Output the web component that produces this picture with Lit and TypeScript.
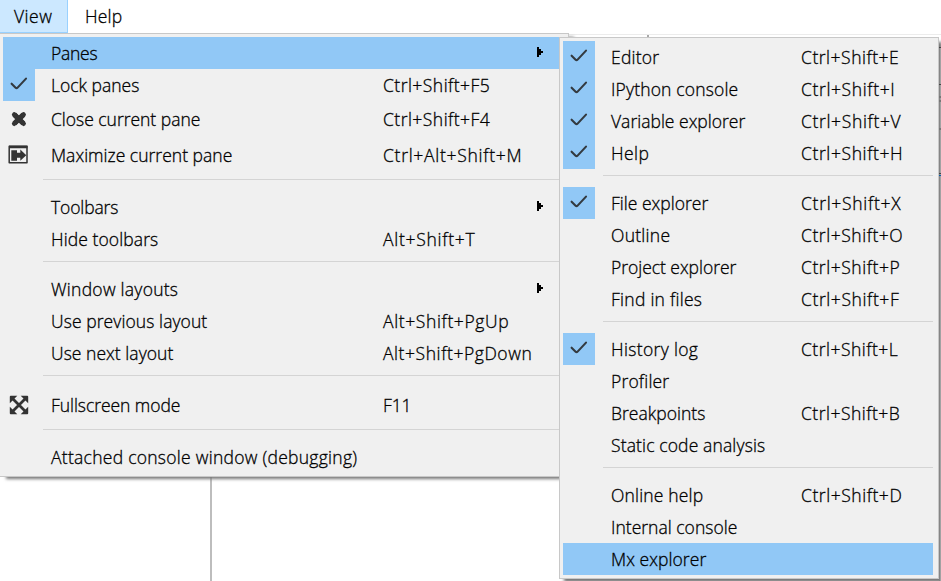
import { LitElement, html, css, svg, nothing } from "lit";
import { customElement, property } from "lit/decorators.js";

type Item = { label: string; w: number; keys?: string; kw?: number; icon?: string; tall?: boolean; sub?: boolean; hot?: boolean } | null;

const viewItems: Item[] = [
  { label: "Panes", w: 46, sub: true, hot: true },
  { label: "Lock panes", w: 88, keys: "Ctrl+Shift+F5", kw: 107, icon: "check" },
  { label: "Close current pane", w: 149, keys: "Ctrl+Shift+F4", kw: 107, icon: "close", tall: true },
  { label: "Maximize current pane", w: 181, keys: "Ctrl+Alt+Shift+M", kw: 139, icon: "maximize", tall: true },
  null,
  { label: "Toolbars", w: 67, sub: true },
  { label: "Hide toolbars", w: 107, keys: "Alt+Shift+T", kw: 92 },
  null,
  { label: "Window layouts", w: 127, sub: true },
  { label: "Use previous layout", w: 156, keys: "Alt+Shift+PgUp", kw: 126 },
  { label: "Use next layout", w: 122, keys: "Alt+Shift+PgDown", kw: 149 },
  null,
  { label: "Fullscreen mode", w: 129, keys: "F11", kw: 28, icon: "full", tall: true },
  null,
  { label: "Attached console window (debugging)", w: 306 },
];

const paneItems: Item[] = [
  { label: "Editor", w: 48, keys: "Ctrl+Shift+E", kw: 98, icon: "check" },
  { label: "IPython console", w: 127, keys: "Ctrl+Shift+I", kw: 94, icon: "check" },
  { label: "Variable explorer", w: 134, keys: "Ctrl+Shift+V", kw: 100, icon: "check" },
  { label: "Help", w: 38, keys: "Ctrl+Shift+H", kw: 102, icon: "check" },
  null,
  { label: "File explorer", w: 97, keys: "Ctrl+Shift+X", kw: 100, icon: "check" },
  { label: "Outline", w: 59, keys: "Ctrl+Shift+O", kw: 102 },
  { label: "Project explorer", w: 125, keys: "Ctrl+Shift+P", kw: 99 },
  { label: "Find in files", w: 91, keys: "Ctrl+Shift+F", kw: 98 },
  null,
  { label: "History log", w: 87, keys: "Ctrl+Shift+L", kw: 97, icon: "check" },
  { label: "Profiler", w: 58 },
  { label: "Breakpoints", w: 94, keys: "Ctrl+Shift+B", kw: 99 },
  { label: "Static code analysis", w: 154 },
  null,
  { label: "Online help", w: 92, keys: "Ctrl+Shift+D", kw: 101 },
  { label: "Internal console", w: 126 },
  { label: "Mx explorer", w: 95, hot: true },
];

const icons: Record<string, unknown> = {
  check: svg`<path d="M8.6 14.7 L12.6 18.8 Q13.6 19.7 14.6 18.6 L23 9.6" fill="none" stroke="#333a40" stroke-width="2.1" stroke-linecap="round"/>`,
  close: svg`<path d="M11.4 11.7 L20.4 20.5 M20.4 11.7 L11.4 20.5" fill="none" stroke="#333" stroke-width="5.2" stroke-linecap="butt"/><path d="M11.2 11.5 L20.6 20.7 M20.6 11.5 L11.2 20.7" fill="none" stroke="#333" stroke-width="4.6" stroke-linecap="round"/>`,
  maximize: svg`<path d="M6.2 7.2H24V23.7H6.2Z" fill="none" stroke="#333" stroke-width="1.5" stroke-linejoin="round"/><path d="M6 6.7H24.5V9.2H6Z M8.3 11.3H14V21.7H8.3Z M14 13.8H17.3V10.6L23.3 16.3L17.3 21.7V18.7H14Z" fill="#333"/>`,
  full: svg`<path d="M9 9 L23 23 M23 9 L9 23" stroke="#333" stroke-width="2.8"/><path d="M6.8 7.7q0-.9.9-.9h6.6l-7.5 7.5Z M25.2 7.7q0-.9-.9-.9h-6.6l7.5 7.5Z M6.8 24.3q0 .9.9.9h6.6l-7.5-7.5Z M25.2 24.3q0 .9-.9.9h-6.6l7.5-7.5Z" fill="#333"/>`,
};

@customElement("fit-text")
class FitText extends LitElement {
  @property() text = "";
  @property({ type: Number }) width = 0;
  static styles = css`
    :host { display: inline-block; white-space: pre; }
    .t { display: inline-block; -webkit-text-stroke: 0.3px #000; }
  `;
  render() {
    return html`<span class="t">${this.text}</span>`;
  }
  firstUpdated() {
    const el = this.renderRoot.querySelector<HTMLElement>(".t")!;
    el.style.letterSpacing = (this.width + 0.3 - el.getBoundingClientRect().width) / this.text.length + "px";
  }
}

@customElement("drop-menu")
class DropMenu extends LitElement {
  @property({ attribute: false }) items: Item[] = [];
  static styles = css`
    :host { display: block; box-sizing: border-box; background: #f0f0f0; border: 1px solid #c8c8c8; padding: 3px; }
    .row { display: grid; grid-template-columns: 48px var(--keys) 1fr 29px; height: 32px; align-items: center; }
    .tall { height: 36px; }
    .hot { background: #91c8f6; }
    .icon { width: 32px; height: 32px; }
    .on { background: #91c8f6; }
    svg { display: block; width: 32px; height: 32px; }
    .arrow { width: 8px; height: 10px; margin-bottom: 2px; }
    .rule { height: 1px; margin: 6px 0 11px 40px; background: #d4d4d4; }
  `;
  render() {
    return this.items.map((i) =>
      i
        ? html`<div class="row ${i.tall ? "tall" : ""} ${i.hot ? "hot" : ""}">
            <div class="icon ${i.icon === "check" ? "on" : ""}">
              ${i.icon ? html`<svg viewBox="0 0 32 32">${icons[i.icon]}</svg>` : nothing}
            </div>
            <fit-text .text=${i.label} .width=${i.w}></fit-text>
            <div>${i.keys ? html`<fit-text .text=${i.keys} .width=${i.kw!}></fit-text>` : nothing}</div>
            ${i.sub
              ? html`<svg class="arrow" viewBox="0 0 8 10" shape-rendering="crispEdges"><path d="M1 0h2v2h2v2h2v2h-2v2h-2v2h-2z"/></svg>`
              : nothing}
          </div>`
        : html`<div class="rule"></div>`,
    );
  }
}

@customElement("app-root")
class AppRoot extends LitElement {
  static styles = css`
    :host { display: block; position: relative; width: 941px; height: 581px; overflow: hidden; background: #fff; color: #000; font: 300 17.5px/24px "Open Sans", "Noto Sans", sans-serif; }
    .bar { display: flex; height: 33px; }
    .tab { box-sizing: border-box; height: 33px; padding: 4px 17px 0; }
    .view { width: 68px; padding-left: 14px; background: #cce8ff; border: solid #99d1ff; border-width: 0 1px 1px 0; }
    .line { position: absolute; left: 0; right: 0; top: 34px; bottom: 0; border-top: 1px solid #ececec; }
    .divider { position: absolute; left: 210px; top: 470px; width: 2px; bottom: 0; background: #bdbdbd; }
    .tick { position: absolute; left: 647px; top: 35px; width: 2px; height: 3px; background: #a8a8a8; }
    .main { position: absolute; left: -1px; top: 33px; width: 570px; height: 444px; --keys: 332px; box-shadow: 6px 3px 3px -1px #777; }
    .panes { position: absolute; left: 559px; top: 37px; width: 380px; height: 542px; padding-right: 5px; --keys: 190px; box-shadow: 4px 4px 3px -1px #777; }
    .edge { position: absolute; left: 939px; top: 47px; width: 2px; bottom: 0; background: linear-gradient(90deg, #858585 50%, #a2a2a2 50%); }
    .mark { position: absolute; left: 0; width: 2px; height: 1px; background: #444; }
    .m1 { top: 0; }
    .m2 { top: 37px; }
    .m3 { top: 49px; height: 2px; background: #777; }
    .m4 { top: 53px; height: 2px; background: #777; }
    .m5 { top: 81px; height: 2px; background: #777; }
    .m6 { top: 126px; }
    .m7 { top: 128px; background: #0a5da8; }
  `;
  render() {
    return html`
      <div class="bar">
        <div class="tab view"><fit-text .text=${"View"} .width=${38}></fit-text></div>
        <div class="tab"><fit-text .text=${"Help"} .width=${37}></fit-text></div>
      </div>
      <div class="line"></div><div class="divider"></div><div class="tick"></div>
      <drop-menu class="main" .items=${viewItems}></drop-menu>
      <drop-menu class="panes" .items=${paneItems}></drop-menu>
      <div class="edge">${[1, 2, 3, 4, 5, 6, 7].map((n) => html`<div class="mark m${n}"></div>`)}</div>
    `;
  }
}
